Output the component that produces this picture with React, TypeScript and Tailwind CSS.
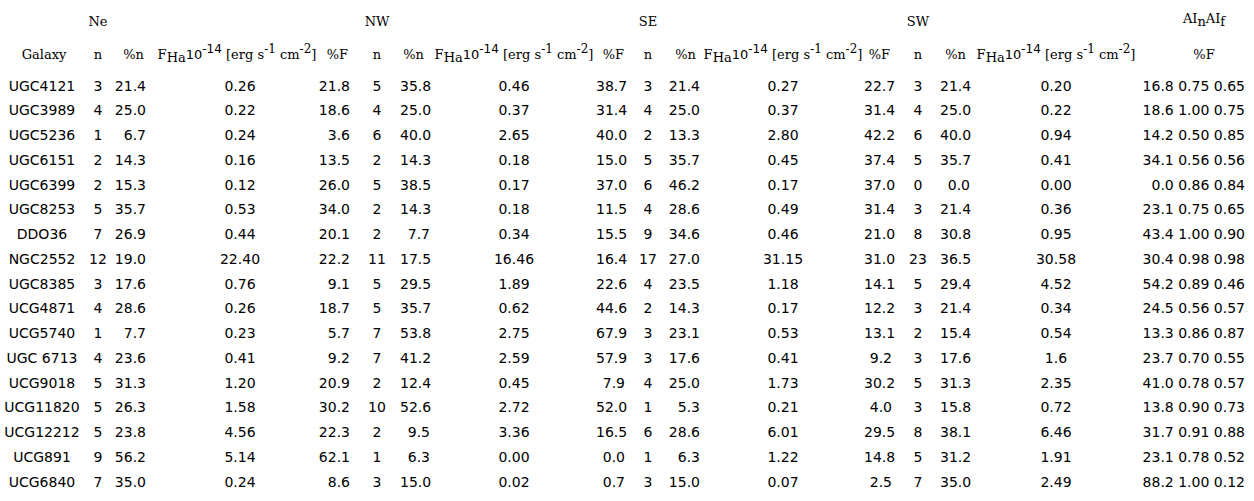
import React from "react";

const rows: string[][] = [
  ["UGC4121", "3", "21.4", "0.26", "21.8", "5", "35.8", "0.46", "38.7", "3", "21.4", "0.27", "22.7", "3", "21.4", "0.20", "16.8 0.75 0.65"],
  ["UGC3989", "4", "25.0", "0.22", "18.6", "4", "25.0", "0.37", "31.4", "4", "25.0", "0.37", "31.4", "4", "25.0", "0.22", "18.6 1.00 0.75"],
  ["UGC5236", "1", "6.7", "0.24", "3.6", "6", "40.0", "2.65", "40.0", "2", "13.3", "2.80", "42.2", "6", "40.0", "0.94", "14.2 0.50 0.85"],
  ["UGC6151", "2", "14.3", "0.16", "13.5", "2", "14.3", "0.18", "15.0", "5", "35.7", "0.45", "37.4", "5", "35.7", "0.41", "34.1 0.56 0.56"],
  ["UGC6399", "2", "15.3", "0.12", "26.0", "5", "38.5", "0.17", "37.0", "6", "46.2", "0.17", "37.0", "0", "0.0", "0.00", "0.0 0.86 0.84"],
  ["UGC8253", "5", "35.7", "0.53", "34.0", "2", "14.3", "0.18", "11.5", "4", "28.6", "0.49", "31.4", "3", "21.4", "0.36", "23.1 0.75 0.65"],
  ["DDO36", "7", "26.9", "0.44", "20.1", "2", "7.7", "0.34", "15.5", "9", "34.6", "0.46", "21.0", "8", "30.8", "0.95", "43.4 1.00 0.90"],
  ["NGC2552", "12", "19.0", "22.40", "22.2", "11", "17.5", "16.46", "16.4", "17", "27.0", "31.15", "31.0", "23", "36.5", "30.58", "30.4 0.98 0.98"],
  ["UGC8385", "3", "17.6", "0.76", "9.1", "5", "29.5", "1.89", "22.6", "4", "23.5", "1.18", "14.1", "5", "29.4", "4.52", "54.2 0.89 0.46"],
  ["UCG4871", "4", "28.6", "0.26", "18.7", "5", "35.7", "0.62", "44.6", "2", "14.3", "0.17", "12.2", "3", "21.4", "0.34", "24.5 0.56 0.57"],
  ["UCG5740", "1", "7.7", "0.23", "5.7", "7", "53.8", "2.75", "67.9", "3", "23.1", "0.53", "13.1", "2", "15.4", "0.54", "13.3 0.86 0.87"],
  ["UGC 6713", "4", "23.6", "0.41", "9.2", "7", "41.2", "2.59", "57.9", "3", "17.6", "0.41", "9.2", "3", "17.6", "1.6", "23.7 0.70 0.55"],
  ["UCG9018", "5", "31.3", "1.20", "20.9", "2", "12.4", "0.45", "7.9", "4", "25.0", "1.73", "30.2", "5", "31.3", "2.35", "41.0 0.78 0.57"],
  ["UCG11820", "5", "26.3", "1.58", "30.2", "10", "52.6", "2.72", "52.0", "1", "5.3", "0.21", "4.0", "3", "15.8", "0.72", "13.8 0.90 0.73"],
  ["UCG12212", "5", "23.8", "4.56", "22.3", "2", "9.5", "3.36", "16.5", "6", "28.6", "6.01", "29.5", "8", "38.1", "6.46", "31.7 0.91 0.88"],
  ["UCG891", "9", "56.2", "5.14", "62.1", "1", "6.3", "0.00", "0.0", "1", "6.3", "1.22", "14.8", "5", "31.2", "1.91", "23.1 0.78 0.52"],
  ["UCG6840", "7", "35.0", "0.24", "8.6", "3", "15.0", "0.02", "0.7", "3", "15.0", "0.07", "2.5", "7", "35.0", "2.49", "88.2 1.00 0.12"],
];

// column widths in px, left to right
const widths = [84, 28, 38, 168, 36, 46, 32, 164, 32, 40, 34, 162, 32, 44, 32, 168, 114];

// alignment for data cells
const align = [
  "text-center",
  "text-center",
  "text-right pr-[4px]",
  "text-center pl-[12px]",
  "text-right pr-[4px]",
  "text-center",
  "text-right pr-[2px]",
  "text-center",
  "text-right pr-[3px]",
  "text-center",
  "text-right pr-[2px]",
  "text-center",
  "text-right pr-[4px]",
  "text-center",
  "text-right pr-[2px]",
  "text-center",
  "text-right pr-[9px]",
];

const serif = "font-['DejaVu_Serif',serif]";
const sans = "font-['DejaVu_Sans',sans-serif]";

function FluxHeader() {
  return (
    <span className="whitespace-nowrap">
      F<sub className="text-[13px]">Ha</sub>
      <span className={sans}>10</span>
      <sup className={`text-[12px] ${sans}`}>-14</sup> [erg s
      <sup className="text-[12px]">-1</sup> cm<sup className="text-[12px]">-2</sup>]
    </span>
  );
}

export default function App() {
  return (
    <div className="w-[1254px] h-[501px] bg-white text-black overflow-hidden">
      <table className={`table-fixed border-collapse w-[1254px] ${sans} text-[14px]`}>
        <colgroup>
          {widths.map((w, i) => (
            <col key={i} style={{ width: w }} />
          ))}
        </colgroup>
        <thead className={`${serif} text-[13px]`}>
          <tr className="h-[40px] align-top">
            <th />
            <th className="font-normal text-center pt-[12px]">Ne</th>
            <th colSpan={3} />
            <th className="font-normal text-center pt-[12px]">NW</th>
            <th colSpan={3} />
            <th className="font-normal text-center pt-[12px]">SE</th>
            <th colSpan={3} />
            <th className="font-normal text-center pt-[12px]">SW</th>
            <th colSpan={2} />
            <th className="font-normal text-center pl-[14px] pt-[9px]">
              AI<sub className="text-[13px]">n</sub>AI<sub className="text-[13px]">f</sub>
            </th>
          </tr>
          <tr className="h-[33.75px] align-top">
            <th className="font-normal text-center pl-[4px] pt-[5px]">Galaxy</th>
            <th className="font-normal text-center pt-[5px]">n</th>
            <th className="font-normal text-right pr-[6px] pt-[5px]">%n</th>
            <th className="font-normal text-center pl-[6px] pt-[5px]">
              <FluxHeader />
            </th>
            <th className="font-normal text-right pr-[6px] pt-[5px]">%F</th>
            <th className="font-normal text-center pt-[5px]">n</th>
            <th className="font-normal text-right pr-[8px] pt-[5px]">%n</th>
            <th className="font-normal text-center pt-[5px]">
              <FluxHeader />
            </th>
            <th className="font-normal text-right pr-[4px] pt-[5px]">%F</th>
            <th className="font-normal text-center pt-[5px]">n</th>
            <th className="font-normal text-right pr-[6px] pt-[5px]">%n</th>
            <th className="font-normal text-center pt-[5px]">
              <FluxHeader />
            </th>
            <th className="font-normal text-right pr-[6px] pt-[5px]">%F</th>
            <th className="font-normal text-center pt-[5px]">n</th>
            <th className="font-normal text-right pr-[6px] pt-[5px]">%n</th>
            <th className="font-normal text-center pt-[5px]">
              <FluxHeader />
            </th>
            <th className="font-normal text-center pl-[14px] pt-[5px]">%F</th>
          </tr>
        </thead>
        <tbody>
          {rows.map((r, i) => (
            <tr key={i} className="h-[24.75px]">
              {r.map((c, j) => (
                <td key={j} className={`${align[j]} whitespace-nowrap p-0`}>
                  {c}
                </td>
              ))}
            </tr>
          ))}
        </tbody>
      </table>
    </div>
  );
}
